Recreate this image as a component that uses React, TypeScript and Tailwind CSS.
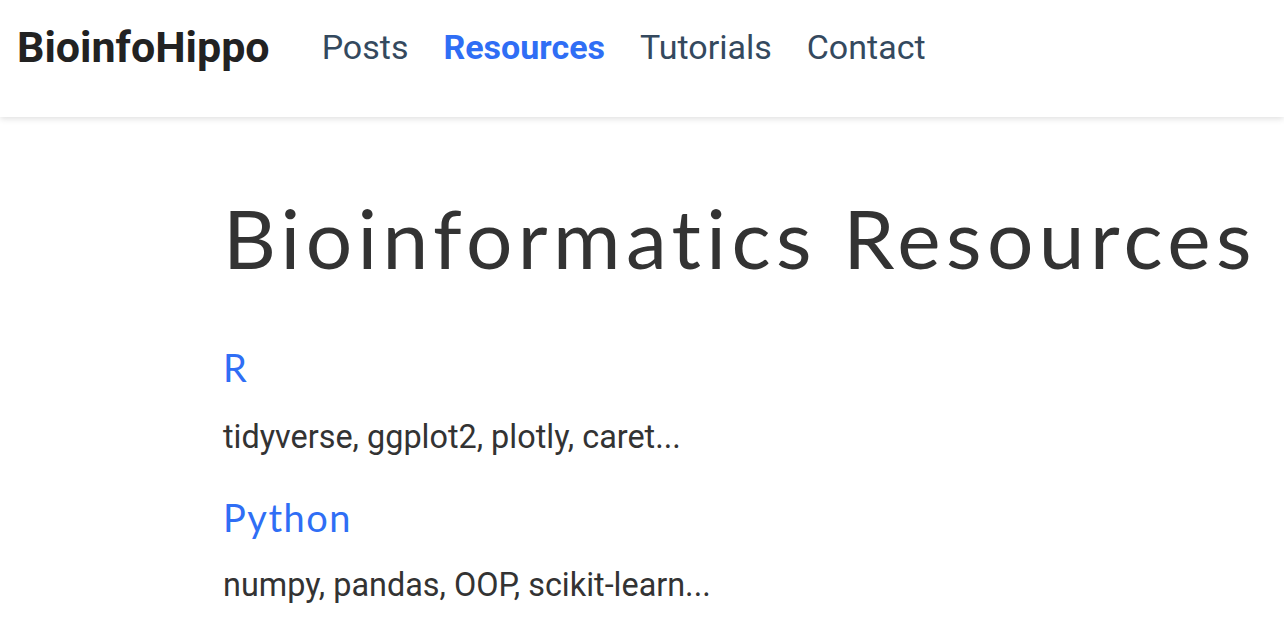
import React from "react";

export default function App() {
  const roboto = { fontFamily: "Roboto, 'Liberation Sans', sans-serif" } as const;
  const head = { fontFamily: "Lato, 'Noto Sans', sans-serif" } as const;
  return (
    <div className="min-h-[640px] bg-white" style={roboto}>
      <header className="h-[117px] bg-white shadow-[0_2px_6px_rgba(0,0,0,0.12)] flex items-center px-[17px] relative z-10">
        <div className="text-[43px] font-bold text-[#222] -mt-[22px]">BioinfoHippo</div>
        <nav className="flex gap-[35px] ml-[52px] -mt-[22px] text-[34px]">
          <a className="text-[#34495e]">Posts</a>
          <a className="text-[#2f6ef5] font-bold">Resources</a>
          <a className="text-[#34495e]">Tutorials</a>
          <a className="text-[#34495e]">Contact</a>
        </nav>
      </header>
      <main className="pl-[223px] pt-[79px]">
        <h1 className="text-[82px] leading-none text-[#333] tracking-[5.4px]" style={head}>
          Bioinformatics Resources
        </h1>
        <section className="mt-[70px]">
          <h2 className="text-[38px] leading-none text-[#2f6ef5] tracking-[1.5px]" style={head}>R</h2>
          <p className="mt-[30px] text-[32.4px] leading-[1.3] text-[#333]">tidyverse, ggplot2, plotly, caret...</p>
        </section>
        <section className="mt-[40px]">
          <h2 className="text-[38px] leading-none text-[#2f6ef5] tracking-[1.5px]" style={head}>Python</h2>
          <p className="mt-[28px] text-[32.4px] leading-[1.3] text-[#333]">numpy, pandas, OOP, scikit-learn...</p>
        </section>
      </main>
    </div>
  );
}
